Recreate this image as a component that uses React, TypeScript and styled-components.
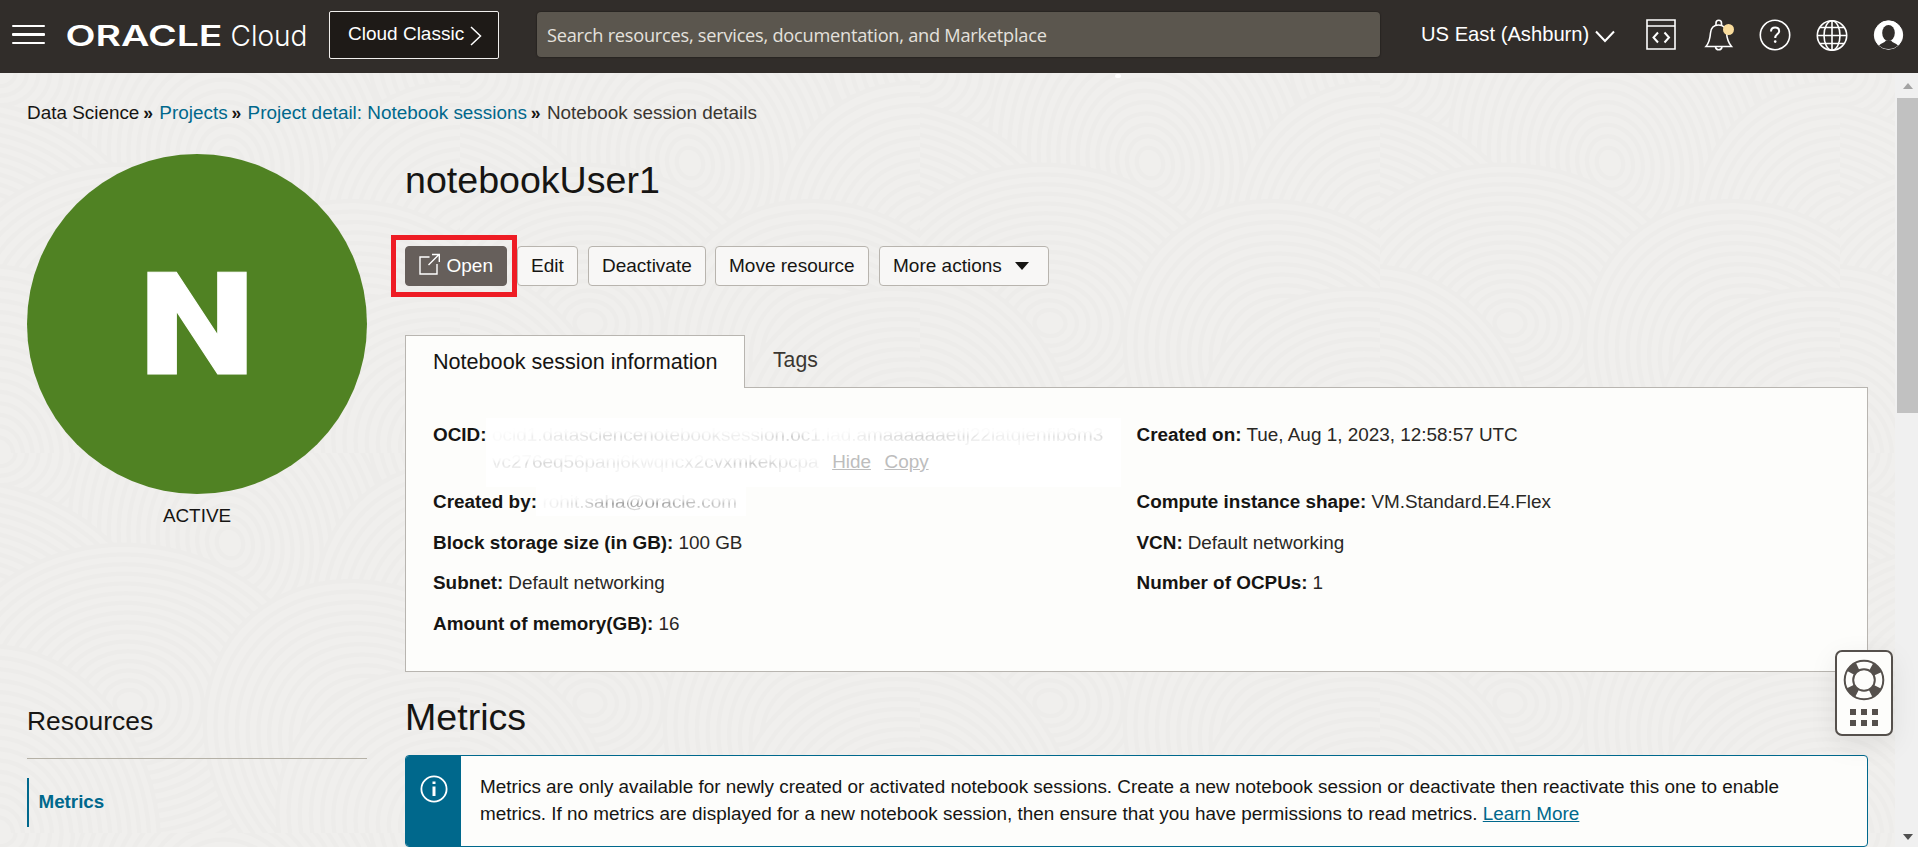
import React from "react";
import styled, { createGlobalStyle, css } from "styled-components";

const GlobalStyle = createGlobalStyle`
  *, *::before, *::after { box-sizing: border-box; }
  html, body { margin: 0; padding: 0; background: #fff; overflow: hidden; }
  body { font-family: "Liberation Sans", Arial, sans-serif; font-size: 18.9px; color: #161513; }
`;

const Page = styled.div`
  display: flex;
  flex-direction: column;
  width: 1918px;
  height: 847px;
  overflow: hidden;
`;

const Header = styled.header`
  display: flex;
  align-items: flex-start;
  flex: none;
  height: 73px;
  background: #312d2a;
  color: #fff;
`;

const MenuButton = styled.button`
  display: flex;
  flex-direction: column;
  gap: 6px;
  margin: 25px 0 0 12px;
  padding: 0;
  width: 33px;
  border: 0;
  background: none;
`;

const MenuBar = styled.span`
  height: 2.4px;
  border-radius: 1px;
  background: #fff;
`;

const Logo = styled.svg`
  display: block;
  width: 244px;
  height: 36px;
  margin: 17px 0 0 20px;
  fill: #fff;
`;

const ClassicButton = styled.button`
  display: flex;
  align-items: flex-start;
  width: 170px;
  height: 48px;
  margin: 11px 0 0 20px;
  padding: 10px 0 0 18px;
  border: 1px solid #f1efed;
  border-radius: 2px;
  background: #1e1a17;
  color: #fff;
  font: 19px/24px "Liberation Sans", Arial, sans-serif;
  white-space: nowrap;

  svg { margin: 4px 0 0 6px; flex: none; }
`;

const Search = styled.div`
  width: 843px;
  height: 45px;
  margin: 12px 0 0 38px;
  padding-left: 10px;
  border-radius: 4px;
  background: #5b564e;
  box-shadow: 0 0 1px 1px #292522;
  color: #e4e1dd;
  font: 18.2px/47px "Open Sans", "Noto Sans", sans-serif;
  letter-spacing: -0.24px;
  white-space: nowrap;
`;

const Region = styled.button`
  display: flex;
  width: 200px;
  margin: 22px 0 0 41px;
  padding: 0;
  border: 0;
  background: none;
  color: #fff;
  font: 20.2px/24px "Liberation Sans", Arial, sans-serif;
  white-space: nowrap;

  svg { margin: 8px 0 0 6px; flex: none; }
`;

const HeaderIcons = styled.div`
  display: flex;
  gap: 24px;
  margin: 18px 0 0 23px;

  svg { display: block; fill: none; stroke: #fff; stroke-width: 1.6; overflow: visible; }
`;

const Body = styled.div`
  display: flex;
  flex: 1;
  min-height: 0;
`;

const Main = styled.main`
  position: relative;
  display: flex;
  flex-direction: column;
  width: 1895px;
  background: #f0efed;
`;

const Backdrop = styled.svg`
  position: absolute;
  inset: 0;
  width: 100%;
  height: 100%;
`;

const Speck = styled.span`
  position: absolute;
  left: 1115px;
  top: 1px;
  width: 6px;
  height: 4px;
  border-radius: 2px;
  background: #fff;
`;

const Breadcrumbs = styled.nav`
  position: relative;
  display: flex;
  align-items: baseline;
  padding: 29px 0 0 27px;
  height: 81px;
  line-height: 22px;
  white-space: nowrap;
`;

const Crumb = styled.span<{ $link?: boolean; $last?: boolean }>`
  color: ${(p) => (p.$link ? "#00688c" : p.$last ? "#3a3631" : "#161513")};
`;

const Divider = styled.span`
  width: 8px;
  margin: 0 8.2px 0 3.8px;
  font-size: 17.5px;
  font-weight: 700;
`;

const Columns = styled.div`
  position: relative;
  display: flex;
  gap: 38px;
  padding: 1px 0 0 27px;
`;

const Side = styled.aside`
  width: 340px;
`;

const StatusDisc = styled.div`
  display: flex;
  align-items: center;
  justify-content: center;
  width: 340px;
  height: 340px;
  border-radius: 50%;
  background: #508223;
  color: #fff;

  svg { width: 240px; height: 240px; fill: #fff; }
`;

const StatusLabel = styled.div`
  margin-top: 11px;
  line-height: 22px;
  text-align: center;
`;

const SideTitle = styled.h2`
  margin: 176px 0 0;
  padding-bottom: 20px;
  height: 56px;
  border-bottom: 1px solid #b5b1a6;
  font-size: 26.4px;
  font-weight: 400;
  line-height: 36px;
`;

const SideLink = styled.a`
  display: block;
  height: 49px;
  margin-top: 19px;
  padding-left: 9.5px;
  border-left: 2px solid #00688c;
  color: #00688c;
  font-weight: 700;
  font-size: 18.8px;
  line-height: 47px;
`;

const Content = styled.section`
  width: 1463px;
`;

const Title = styled.h1<{ $top: number }>`
  margin: ${(p) => p.$top}px 0 0;
  font-size: 37.6px;
  font-weight: 400;
  line-height: 44px;
`;

const Actions = styled.div`
  position: relative;
  display: flex;
  margin-top: 44px;
`;

const Action = styled.button<{ $primary?: boolean; $w: number; $gap: number }>`
  display: flex;
  align-items: center;
  width: ${(p) => p.$w}px;
  height: 40px;
  margin-left: ${(p) => p.$gap}px;
  padding: 0 0 1px 13px;
  border: 1px solid #b8b4ae;
  border-radius: 4px;
  background: #f8f7f6;
  color: #161513;
  font: 19px/22px "Liberation Sans", Arial, sans-serif;
  white-space: nowrap;

  ${(p) =>
    p.$primary &&
    css`
      border-color: #665f5b;
      background: #665f5b;
      color: #fff;
      svg { margin: -4px 5.5px 0 0; }
    `}
`;

const Caret = styled.span`
  margin: 1px 0 0 13px;
  border: 7px solid transparent;
  border-top: 8px solid #161513;
  border-bottom: 0;
`;

const Highlight = styled.span`
  position: absolute;
  left: -14px;
  top: -11px;
  width: 126px;
  height: 62px;
  border: 5px solid #ee1c24;
`;

const Tabs = styled.div`
  display: flex;
  margin-top: 49px;
`;

const Tab = styled.div<{ $active?: boolean }>`
  position: relative;
  z-index: 1;
  height: 52px;
  padding-left: 27px;
  font-size: 21.6px;
  line-height: 51px;
  white-space: nowrap;
  ${(p) =>
    p.$active
      ? css`
          height: 53px;
          width: 340px;
          margin-bottom: -1px;
          border: 1px solid #b8b5b0;
          border-bottom: 0;
          background: #fdfdfb;
        `
      : css`
          padding-left: 28px;
          color: #3a3631;
          font-size: 21.2px;
          line-height: 50px;
        `}
`;

const Panel = styled.div`
  display: grid;
  grid-template-columns: 703.5px 1fr;
  height: 285px;
  padding: 33px 0 0 27px;
  border: 1px solid #b8b5b0;
  background: #fdfdfb;
`;

const Fields = styled.dl`
  display: flex;
  flex-direction: column;
  gap: 13.5px;
  margin: 0;
`;

const Field = styled.div<{ $lines?: number }>`
  display: flex;
  height: ${(p) => (p.$lines ?? 1) * 27}px;
  line-height: 27px;
  white-space: nowrap;

  dt { font-weight: 700; margin-right: 5px; }
  dd { margin: 0; color: #2a2825; }
  &:nth-child(n + 2) { margin-top: -0.1px; }
  &:nth-child(2) { margin-top: -0.6px; margin-bottom: 0.4px; }
`;

const Faded = styled.dd<{ $w: number; $h: number }>`
  && {
    width: ${(p) => p.$w}px;
    height: ${(p) => p.$h}px;
    margin: -3px 0 0 -6px;
    padding: 3px 0 0 6.5px;
    background: #fff;
    color: #d8d8d8;
  }
`;

const FadedLine = styled.span<{ $mask: string; $tone?: string }>`
  display: inline-block;
  color: ${(p) => p.$tone ?? "#c8c8c8"};
  mask-image: linear-gradient(to bottom, rgba(0, 0, 0, 0.15) 40%, #000 58%, rgba(0, 0, 0, 0.4) 78%),
    linear-gradient(to right, ${(p) => p.$mask});
  mask-composite: intersect;
`;

const FadedLink = styled.a`
  margin-left: 13.5px;
  color: #bdbdbd;
  text-decoration: underline;
`;

const Callout = styled.div`
  display: flex;
  height: 92px;
  margin-top: 16px;
  border: 1px solid #00688c;
  border-radius: 4px;
  background: #fdfdfb;
  overflow: hidden;
`;

const CalloutMark = styled.div`
  flex: none;
  width: 55px;
  padding: 18.5px 0 0 13.5px;
  background: #00688c;
`;

const CalloutText = styled.p`
  margin: 0;
  padding: 17px 0 0 19px;
  line-height: 27px;
  white-space: nowrap;

  a { color: #00688c; text-decoration: underline; }
`;

const HelpWidget = styled.div`
  position: absolute;
  left: 1835px;
  top: 577px;
  display: flex;
  flex-direction: column;
  align-items: center;
  width: 58px;
  height: 86px;
  padding-top: 7px;
  border: 2px solid #55504c;
  border-radius: 7px;
  background: #fdfdfb;
  box-shadow: 0 8px 28px rgba(0, 0, 0, 0.08);
`;

const Dots = styled.div`
  display: grid;
  grid-template-columns: repeat(3, 6px);
  gap: 5px;
  margin-top: 8px;

  i { width: 6px; height: 6px; background: #55504c; }
`;

const Scrollbar = styled.div`
  display: flex;
  flex-direction: column;
  align-items: flex-end;
  width: 23px;
  background: #f0f0f0;
`;

const Thumb = styled.div`
  width: 21px;
  height: 315px;
  background: #c1c1c1;
`;

const Arrow = styled.div<{ $up?: boolean }>`
  height: ${(p) => (p.$up ? 25 : 434)}px;
  width: 21px;
  display: flex;
  justify-content: center;
  align-items: ${(p) => (p.$up ? "flex-start" : "flex-end")};
  padding: ${(p) => (p.$up ? "10px 0 0" : "0 0 7px")};

  &::after {
    content: "";
    border: 5.5px solid transparent;
    ${(p) => (p.$up ? "border-bottom: 6px solid #a3a3a3; border-top: 0;" : "border-top: 6px solid #505050; border-bottom: 0;")}
  }
`;

const ringRadii = Array.from({ length: 16 }, (_, i) => 188 - i * 11.5);

// Rings in painting order: a later group covers the ones below it.
const ringCentres: Array<[number, number]> = [
  [0, 0], [460, 0], [230, 90], [-20, 190], [480, 190], [130, 250], [380, 300], [0, 380], [460, 380],
];

function Contours() {
  return (
    <Backdrop aria-hidden="true">
      <defs>
        <pattern id="contours" width="460" height="380" patternUnits="userSpaceOnUse">
          <rect width="460" height="380" fill="#f0efed" />
          {ringCentres.map(([cx, cy], n) => (
            <g key={n} transform={`translate(${cx} ${cy}) rotate(${(n * 37) % 90})`}>
              {ringRadii.map((r) => (
                <ellipse key={r} rx={r} ry={r * 0.84} fill="#f0efed" stroke="#edecea" strokeWidth="4" />
              ))}
            </g>
          ))}
        </pattern>
      </defs>
      <rect width="100%" height="100%" fill="url(#contours)" />
    </Backdrop>
  );
}

function OracleLogo() {
  return (
    <Logo viewBox="0 0 244 36">
      <text x="0.5" y="28.7" fontFamily="Inter, sans-serif" fontWeight="600" fontSize="28" textLength="157" lengthAdjust="spacingAndGlyphs">ORACLE</text>
      <text x="165.500" y="28.7" fontFamily="Inter, sans-serif" fontWeight="300" fontSize="29" textLength="77" lengthAdjust="spacingAndGlyphs">Cloud</text>
    </Logo>
  );
}

function ToolbarIcons() {
  return (
    <HeaderIcons>
      <svg width="34" height="34" viewBox="0 0 34 34">
        <path d="M3 2H31V31H3ZM3 8H31" />
        <path d="M14 14.5L9.5 19.5L14 24.5M20.5 14.5L25 19.5L20.5 24.5" strokeWidth="2" />
      </svg>
      <svg width="34" height="34" viewBox="-1 0 34 34">
        <path d="M3 28.5C6 25 7 21 7.500 15C8 9.500 11 7 15.500 7C20 7 23 9.500 23.500 15C24 21 25.500 25 28.500 28.500Z" />
        <path d="M13 7V5A2.700 2.700 0 0 1 18.500 5V7M12.500 29A3.300 3.300 0 0 0 19 29" />
        <circle cx="25.500" cy="11.500" r="5.500" fill="#f9dc9c" stroke="none" />
      </svg>
      <svg width="34" height="34" viewBox="-1 0 34 34">
        <circle cx="14" cy="17" r="14.700" />
        <path d="M10 13.500C10 10.800 11.700 9.500 14.200 9.500C16.700 9.500 18.200 11 18.200 13.200C18.200 16 14.200 16.300 14.200 20" strokeWidth="2" />
        <circle cx="14.200" cy="23.600" r="1.300" fill="#fff" stroke="none" />
      </svg>
      <svg width="34" height="34" viewBox="-1 0 34 34">
        <circle cx="13" cy="17.500" r="14.700" />
        <ellipse cx="13" cy="17.500" rx="8" ry="14.700" />
        <path d="M13 3V32M-1.500 17.500H27.500M1 9.500H25M1 25.500H25" />
      </svg>
      <svg width="34" height="34" viewBox="-0.500 0 34 34">
        <circle cx="12" cy="17" r="14.200" fill="#fff" strokeWidth="1" />
        <path d="M2.500 27.500C4.500 25 8 25 9.500 22.500H14.500C16 25 19.500 25 21.500 27.500C16.500 32.300 7.500 32.300 2.500 27.500Z" fill="#312d2a" stroke="none" />
        <ellipse cx="12" cy="15" rx="6.300" ry="8" fill="#312d2a" stroke="none" />
      </svg>
    </HeaderIcons>
  );
}

function Lifebuoy() {
  return (
    <svg width="42" height="42" viewBox="0 0 42 42" fill="none" stroke="#55504c">
      <circle cx="21" cy="21" r="15" strokeWidth="9" strokeDasharray="9.500 14.062" strokeDashoffset="-7.031" />
      <circle cx="21" cy="21" r="19.300" strokeWidth="2" />
      <circle cx="21" cy="21" r="10.800" strokeWidth="2" />
    </svg>
  );
}

export default function App() {
  return (
    <>
      <GlobalStyle />
      <Page>
        <Header>
          <MenuButton aria-label="Menu"><MenuBar /><MenuBar /><MenuBar /></MenuButton>
          <OracleLogo />
          <ClassicButton>
            Cloud Classic
            <svg width="12" height="20" viewBox="0 0 12 20" fill="none" stroke="#fff" strokeWidth="1.500"><path d="M1 1L10.500 10L1 19" /></svg>
          </ClassicButton>
          <Search>Search resources, services, documentation, and Marketplace</Search>
          <Region>
            US East (Ashburn)
            <svg width="20" height="13" viewBox="0 0 20 13" fill="none" stroke="#fff" strokeWidth="2"><path d="M1 1.500L10 11L19 1.500" /></svg>
          </Region>
          <ToolbarIcons />
        </Header>
        <Body>
          <Main>
            <Contours />
            <Speck />
            <Breadcrumbs>
              <Crumb>Data Science</Crumb><Divider>»</Divider>
              <Crumb $link>Projects</Crumb><Divider>»</Divider>
              <Crumb $link>Project detail: Notebook sessions</Crumb><Divider>»</Divider>
              <Crumb $last>Notebook session details</Crumb>
            </Breadcrumbs>
            <Columns>
              <Side>
                <StatusDisc>
                  <svg viewBox="0 0 240 240">
                    <text x="62" y="170" fontFamily="Roboto, sans-serif" fontWeight="900" fontSize="143.5" textLength="116" lengthAdjust="spacingAndGlyphs" stroke="#fff" strokeWidth="1">N</text>
                  </svg>
                </StatusDisc>
                <StatusLabel>ACTIVE</StatusLabel>
                <SideTitle>Resources</SideTitle>
                <SideLink>Metrics</SideLink>
              </Side>
              <Content>
                <Title $top={4}>notebookUser1</Title>
                <Actions>
                  <Action $primary $w={102} $gap={0}>
                    <svg width="22" height="22" viewBox="0 0 22 22" fill="none" stroke="#fff" strokeWidth="1.400">
                      <path d="M10.500 4H1V21H18V11M9.500 12L20 1.500M13 1.500H20.300V9" />
                    </svg>
                    Open
                  </Action>
                  <Action $w={61} $gap={10}>Edit</Action>
                  <Action $w={118} $gap={10}>Deactivate</Action>
                  <Action $w={154} $gap={9}>Move resource</Action>
                  <Action $w={170} $gap={10}>More actions<Caret /></Action>
                  <Highlight />
                </Actions>
                <Tabs>
                  <Tab $active>Notebook session information</Tab>
                  <Tab>Tags</Tab>
                </Tabs>
                <Panel>
                  <Fields>
                    <Field $lines={2}>
                      <dt>OCID:</dt>
                      <Faded $w={635} $h={69}>
                        <FadedLine $mask="rgba(0,0,0,.1), rgba(0,0,0,.8) 20%, rgba(0,0,0,.3) 42%, #000 49%, rgba(0,0,0,.15) 56%, rgba(0,0,0,.9) 70%, rgba(0,0,0,.3) 84%, rgba(0,0,0,.7)">
                          ocid1.datasciencenotebooksession.oc1.iad.amaaaaaaetlj22iatqienfib6m3
                        </FadedLine>
                        <br />
                        <FadedLine $mask="rgba(0,0,0,.4), rgba(0,0,0,.8) 15%, rgba(0,0,0,.3) 50%, #000 80%, rgba(0,0,0,.3)">
                          vc276eq56panj6kwqncx2cvxmkekpcpa
                        </FadedLine>
                        <FadedLink>Hide</FadedLink>
                        <FadedLink>Copy</FadedLink>
                      </Faded>
                    </Field>
                    <Field>
                      <dt>Created by:</dt>
                      <Faded $w={210} $h={31}>
                        <FadedLine $tone="#9c9c9c" $mask="rgba(0,0,0,.1), rgba(0,0,0,.3) 15%, #000 35%, #000 60%, rgba(0,0,0,.5)">
                          rohit.saha@oracle.com
                        </FadedLine>
                      </Faded>
                    </Field>
                    <Field><dt>Block storage size (in GB):</dt><dd>100 GB</dd></Field>
                    <Field><dt>Subnet:</dt><dd>Default networking</dd></Field>
                    <Field><dt>Amount of memory(GB):</dt><dd>16</dd></Field>
                  </Fields>
                  <Fields>
                    <Field $lines={2}><dt>Created on:</dt><dd>Tue, Aug 1, 2023, 12:58:57 UTC</dd></Field>
                    <Field><dt>Compute instance shape:</dt><dd>VM.Standard.E4.Flex</dd></Field>
                    <Field><dt>VCN:</dt><dd>Default networking</dd></Field>
                    <Field><dt>Number of OCPUs:</dt><dd>1</dd></Field>
                  </Fields>
                </Panel>
                <Title $top={23}>Metrics</Title>
                <Callout>
                  <CalloutMark>
                    <svg width="28" height="28" viewBox="0 0 28 28" fill="none" stroke="#fff" strokeWidth="1.800">
                      <circle cx="14" cy="14" r="12.600" />
                      <path d="M14 11.500V21M14 6.500V9" strokeWidth="3" />
                    </svg>
                  </CalloutMark>
                  <CalloutText>
                    Metrics are only available for newly created or activated notebook sessions. Create a new notebook session or deactivate then reactivate this one to enable
                    <br />
                    metrics. If no metrics are displayed for a new notebook session, then ensure that you have permissions to read metrics. <a>Learn More</a>
                  </CalloutText>
                </Callout>
              </Content>
            </Columns>
            <HelpWidget>
              <Lifebuoy />
              <Dots><i /><i /><i /><i /><i /><i /></Dots>
            </HelpWidget>
          </Main>
          <Scrollbar>
            <Arrow $up />
            <Thumb />
            <Arrow />
          </Scrollbar>
        </Body>
      </Page>
    </>
  );
}
